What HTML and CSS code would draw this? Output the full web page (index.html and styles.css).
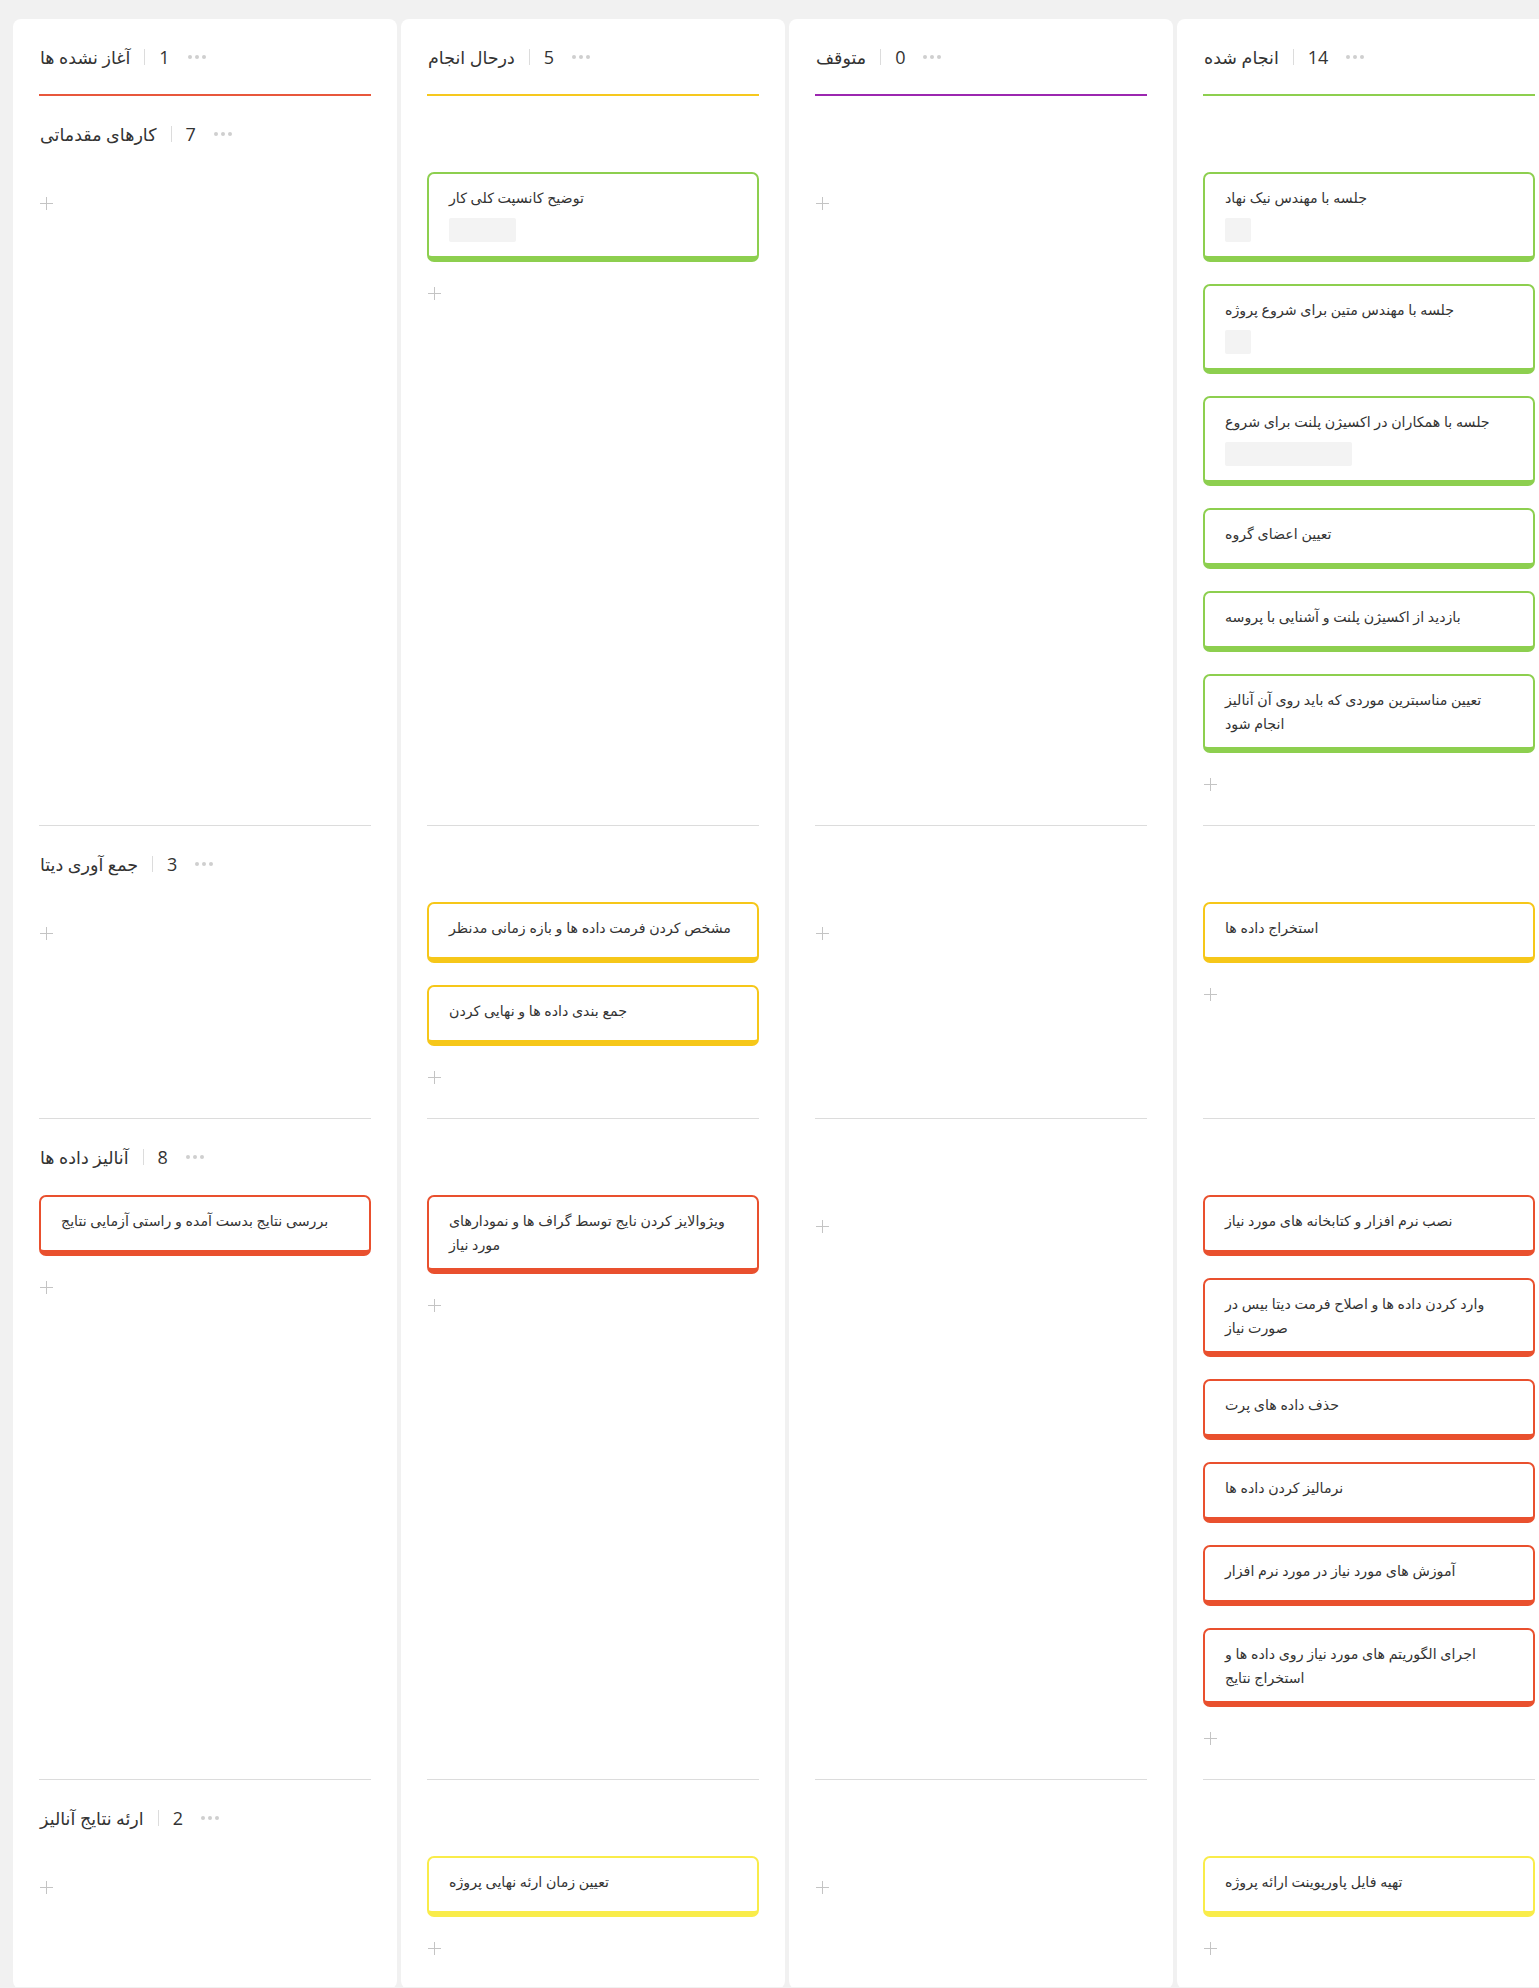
FILE: index.html
```html
<!DOCTYPE html>
<html lang="fa">
<head>
<meta charset="utf-8">
<title>Board</title>
<link rel="stylesheet" href="styles.css">
</head>
<body>
<div class="board">
  <!-- column headers -->
  <div class="cell top"><div class="col-head c-red"><span class="title">آغاز نشده ها</span><span class="sep"></span><span class="count">1</span><span class="dots"><i></i><i></i><i></i></span></div></div>
  <div class="cell top"><div class="col-head c-amber"><span class="title">درحال انجام</span><span class="sep"></span><span class="count">5</span><span class="dots"><i></i><i></i><i></i></span></div></div>
  <div class="cell top"><div class="col-head c-purple"><span class="title">متوقف</span><span class="sep"></span><span class="count">0</span><span class="dots"><i></i><i></i><i></i></span></div></div>
  <div class="cell top"><div class="col-head c-green"><span class="title">انجام شده</span><span class="sep"></span><span class="count">14</span><span class="dots"><i></i><i></i><i></i></span></div></div>

  <!-- lane 1 -->
  <div class="cell"><div class="lane first">
    <div class="lane-head"><span class="title">کارهای مقدماتی</span><span class="sep"></span><span class="count">7</span><span class="dots"><i></i><i></i><i></i></span></div>
    <div class="add"><span class="plus"></span></div>
  </div></div>
  <div class="cell"><div class="lane first">
    <div class="lane-head"></div>
    <div class="cards">
      <div class="card green">توضیح کانسپت کلی کار<div class="tag w67"></div></div>
    </div>
    <div class="add"><span class="plus"></span></div>
  </div></div>
  <div class="cell"><div class="lane first">
    <div class="lane-head"></div>
    <div class="add"><span class="plus"></span></div>
  </div></div>
  <div class="cell"><div class="lane first">
    <div class="lane-head"></div>
    <div class="cards">
      <div class="card green">جلسه با مهندس نیک نهاد<div class="tag w26"></div></div>
      <div class="card green">جلسه با مهندس متین برای شروع پروژه<div class="tag w26"></div></div>
      <div class="card green"> جلسه با همکاران در اکسیژن پلنت برای شروع<div class="tag w127"></div></div>
      <div class="card green">تعیین اعضای گروه</div>
      <div class="card green">بازدید از اکسیژن پلنت و آشنایی با پروسه</div>
      <div class="card green"> تعیین مناسبترین موردی که باید روی آن آنالیز انجام شود</div>
    </div>
    <div class="add"><span class="plus"></span></div>
  </div></div>

  <!-- lane 2 -->
  <div class="cell"><div class="lane">
    <div class="lane-head"><span class="title">جمع آوری دیتا</span><span class="sep"></span><span class="count">3</span><span class="dots"><i></i><i></i><i></i></span></div>
    <div class="add"><span class="plus"></span></div>
  </div></div>
  <div class="cell"><div class="lane">
    <div class="lane-head"></div>
    <div class="cards">
      <div class="card amber">مشخص کردن فرمت داده ها و بازه زمانی مدنظر</div>
      <div class="card amber">جمع بندی داده ها و نهایی کردن</div>
    </div>
    <div class="add"><span class="plus"></span></div>
  </div></div>
  <div class="cell"><div class="lane">
    <div class="lane-head"></div>
    <div class="add"><span class="plus"></span></div>
  </div></div>
  <div class="cell"><div class="lane">
    <div class="lane-head"></div>
    <div class="cards">
      <div class="card amber">استخراج داده ها</div>
    </div>
    <div class="add"><span class="plus"></span></div>
  </div></div>

  <!-- lane 3 -->
  <div class="cell"><div class="lane">
    <div class="lane-head"><span class="title">آنالیز داده ها</span><span class="sep"></span><span class="count">8</span><span class="dots"><i></i><i></i><i></i></span></div>
    <div class="cards">
      <div class="card red"> بررسی نتایج بدست آمده و راستی آزمایی نتایج</div>
    </div>
    <div class="add"><span class="plus"></span></div>
  </div></div>
  <div class="cell"><div class="lane">
    <div class="lane-head"></div>
    <div class="cards">
      <div class="card red">ویژوالایز کردن نایج توسط گراف ها و نمودارهای مورد نیاز</div>
    </div>
    <div class="add"><span class="plus"></span></div>
  </div></div>
  <div class="cell"><div class="lane">
    <div class="lane-head"></div>
    <div class="add"><span class="plus"></span></div>
  </div></div>
  <div class="cell"><div class="lane">
    <div class="lane-head"></div>
    <div class="cards">
      <div class="card red">نصب نرم افزار و کتابخانه های مورد نیاز</div>
      <div class="card red"> وارد کردن داده ها و اصلاح فرمت دیتا بیس در صورت نیاز</div>
      <div class="card red">حذف داده های پرت</div>
      <div class="card red">نرمالیز کردن داده ها</div>
      <div class="card red">آموزش های مورد نیاز در مورد نرم افزار</div>
      <div class="card red"> اجرای الگوریتم های مورد نیاز روی داده ها و استخراج نتایج</div>
    </div>
    <div class="add"><span class="plus"></span></div>
  </div></div>

  <!-- lane 4 -->
  <div class="cell bottom"><div class="lane">
    <div class="lane-head"><span class="title">ارئه نتایج آنالیز</span><span class="sep"></span><span class="count">2</span><span class="dots"><i></i><i></i><i></i></span></div>
    <div class="add"><span class="plus"></span></div>
  </div></div>
  <div class="cell bottom"><div class="lane">
    <div class="lane-head"></div>
    <div class="cards">
      <div class="card yellow">تعیین زمان ارئه نهایی پروژه</div>
    </div>
    <div class="add"><span class="plus"></span></div>
  </div></div>
  <div class="cell bottom"><div class="lane">
    <div class="lane-head"></div>
    <div class="add"><span class="plus"></span></div>
  </div></div>
  <div class="cell bottom"><div class="lane">
    <div class="lane-head"></div>
    <div class="cards">
      <div class="card yellow">تهیه فایل پاورپوینت ارائه پروژه</div>
    </div>
    <div class="add"><span class="plus"></span></div>
  </div></div>
</div>
</body>
</html>
```
FILE: styles.css
```css
html, body {
  margin: 0;
  padding: 0;
  overflow: hidden;
}
body {
  background: #f1f1f1;
  font-family: "Open Sans", "DejaVu Sans", sans-serif;
  color: #333;
}
.board {
  display: grid;
  grid-template-columns: repeat(4, 384px);
  grid-template-rows: auto auto auto auto 1fr;
  column-gap: 4px;
  padding: 19px 0 0 13px;
  height: 1968px;
  width: max-content;
}
.cell {
  background: #fff;
  padding: 0 26px;
}
.cell.top { border-radius: 8px 8px 0 0; }
.cell.bottom { border-radius: 0 0 8px 8px; }

.col-head {
  height: 75px;
  border-bottom: 2px solid #ccc;
  display: flex;
  align-items: center;
}
.c-red { border-bottom-color: #e8573c; }
.c-amber { border-bottom-color: #f6c81e; }
.c-purple { border-bottom-color: #9c27b0; }
.c-green { border-bottom-color: #8dcf4f; }

.title {
  font-size: 17.5px;
  color: #333;
  padding-left: 1px;
}
.sep {
  width: 1px;
  height: 16px;
  background: #dcdcdc;
  margin: 0 14px;
}
.count {
  font-size: 18px;
  color: #333;
}
.dots {
  display: flex;
  gap: 3px;
  margin-left: 18px;
}
.dots i {
  width: 4px;
  height: 4px;
  border-radius: 50%;
  background: #cfcfcf;
}

.lane {
  border-top: 1px solid #dcdcdc;
  padding-bottom: 32px;
}
.lane.first { border-top: 0; }
.lane-head {
  height: 76px;
  display: flex;
  align-items: center;
}

.card {
  box-sizing: border-box;
  min-height: 61px;
  background: #fff;
  border: 2px solid #ccc;
  border-bottom-width: 6px;
  border-radius: 7px;
  padding: 12px 18px 11px 20px;
  font-size: 14.2px;
  line-height: 24px;
  color: #333;
}
.card + .card { margin-top: 22px; }
.card.green { border-color: #8dcf4f; }
.card.amber { border-color: #f6c719; }
.card.red { border-color: #e9502e; }
.card.yellow { border-color: #f9ec4a; }

.tag {
  height: 24px;
  background: #f3f3f3;
  border-radius: 2px;
  margin: 8px 0 3px;
}
.w26 { width: 26px; }
.w67 { width: 67px; }
.w127 { width: 127px; }

.add {
  padding-top: 22px;
  height: 18px;
  display: flex;
  align-items: center;
}
.plus {
  position: relative;
  width: 13px;
  height: 13px;
  margin-left: 1px;
}
.plus::before,
.plus::after {
  content: "";
  position: absolute;
  background: #c4c4c4;
}
.plus::before {
  left: 0;
  right: 0;
  top: 6px;
  height: 1px;
}
.plus::after {
  top: 0;
  bottom: 0;
  left: 6px;
  width: 1px;
}
```
